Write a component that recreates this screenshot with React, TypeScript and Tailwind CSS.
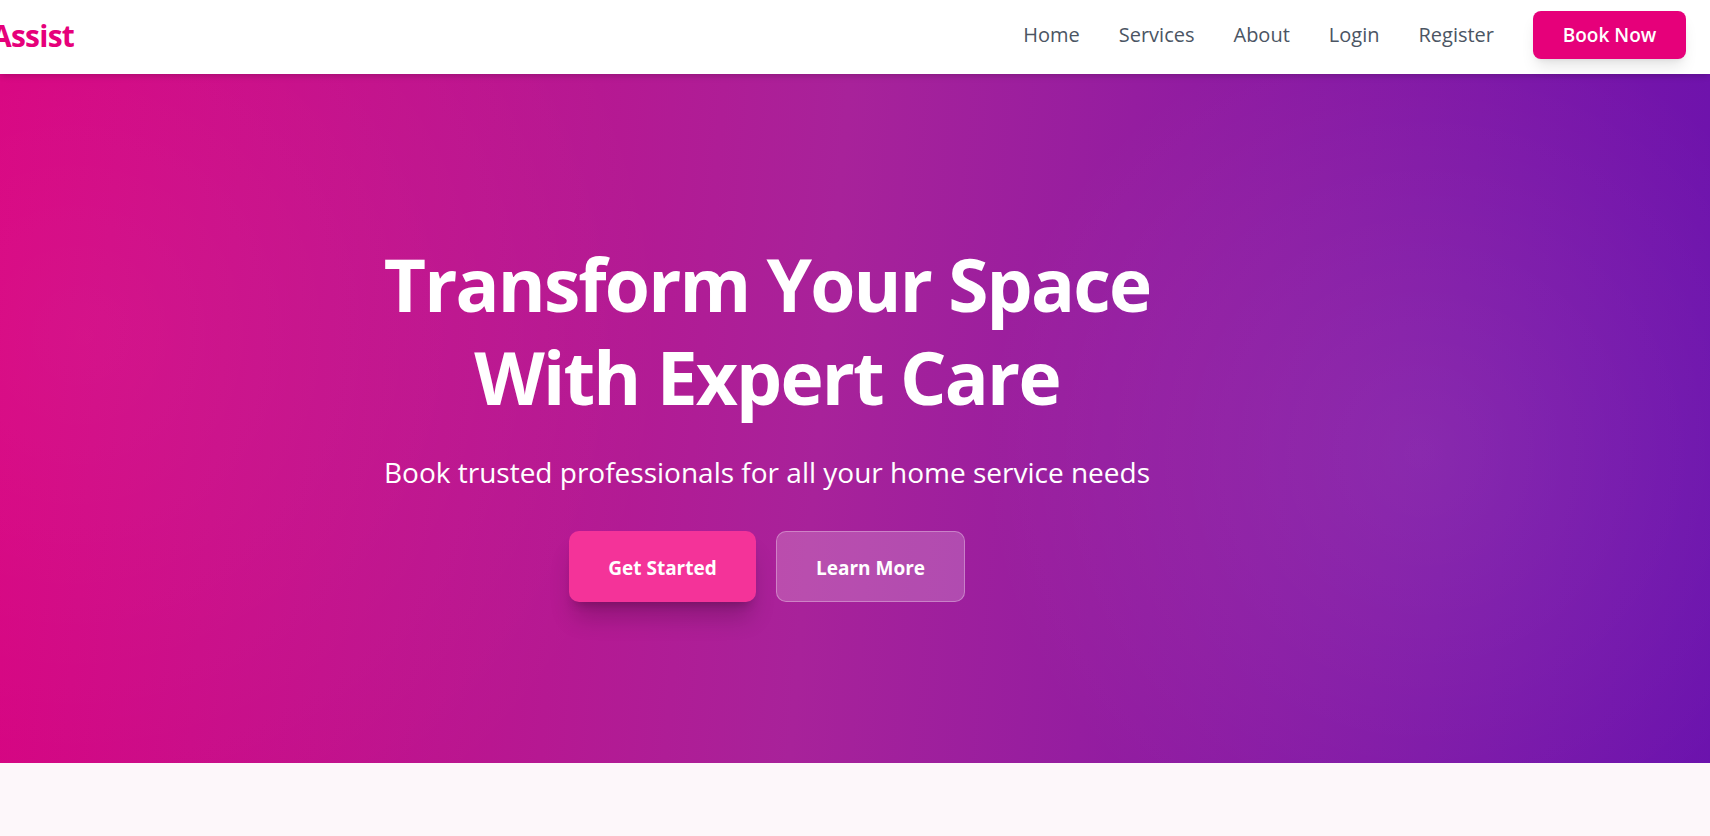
const links = ["Home", "Services", "About", "Login", "Register"];

export default function App() {
  return (
    <div className="min-h-screen overflow-hidden bg-[#fdf7fa] font-['Open_Sans',sans-serif]">
      {/* NAVBAR */}
      <nav className="relative z-10 flex h-[74px] items-center justify-between bg-white pb-[4px] pr-6 shadow-md">
        <span className="-ml-[9px] text-[30px] font-bold tracking-tight text-[#e6007a]">
          Assist
        </span>

        <div className="flex items-center gap-[39px]">
          {links.map((link) => (
            <a
              key={link}
              href="#"
              className="text-[20px] font-medium text-[#4b5563]"
            >
              {link}
            </a>
          ))}
          <button className="h-[48px] w-[153px] rounded-lg bg-[#e6007a] text-[19px] font-semibold text-white shadow-lg">
            Book Now
          </button>
        </div>
      </nav>

      {/* HERO */}
      <section className="flex h-[689px] flex-col items-center bg-[image:radial-gradient(circle_at_5%_38%,rgba(255,255,255,0.06),transparent_35%),radial-gradient(circle_at_83%_55%,rgba(255,255,255,0.08),transparent_30%),linear-gradient(95deg,#d8007f_0%,#a8229a_48%,#6b12ad_100%)] pr-[176px] pt-[163px] text-center text-white">
        <h1 className="text-[73px] font-bold leading-[93px] tracking-tight">
          Transform Your Space
          <br />
          With Expert Care
        </h1>

        <p className="mt-[29px] text-[28px] leading-[40px]">
          Book trusted professionals for all your home service needs
        </p>

        <div className="mt-[39px] flex gap-5">
          <button className="h-[71px] w-[187px] rounded-[10px] bg-[#f43399] pt-[4px] text-[19px] font-bold shadow-xl shadow-black/20">
            Get Started
          </button>
          <button className="h-[71px] w-[189px] rounded-[10px] border border-white/30 bg-white/20 pt-[4px] text-[19px] font-bold">
            Learn More
          </button>
        </div>
      </section>

      <div className="h-[73px]" />
    </div>
  );
}
